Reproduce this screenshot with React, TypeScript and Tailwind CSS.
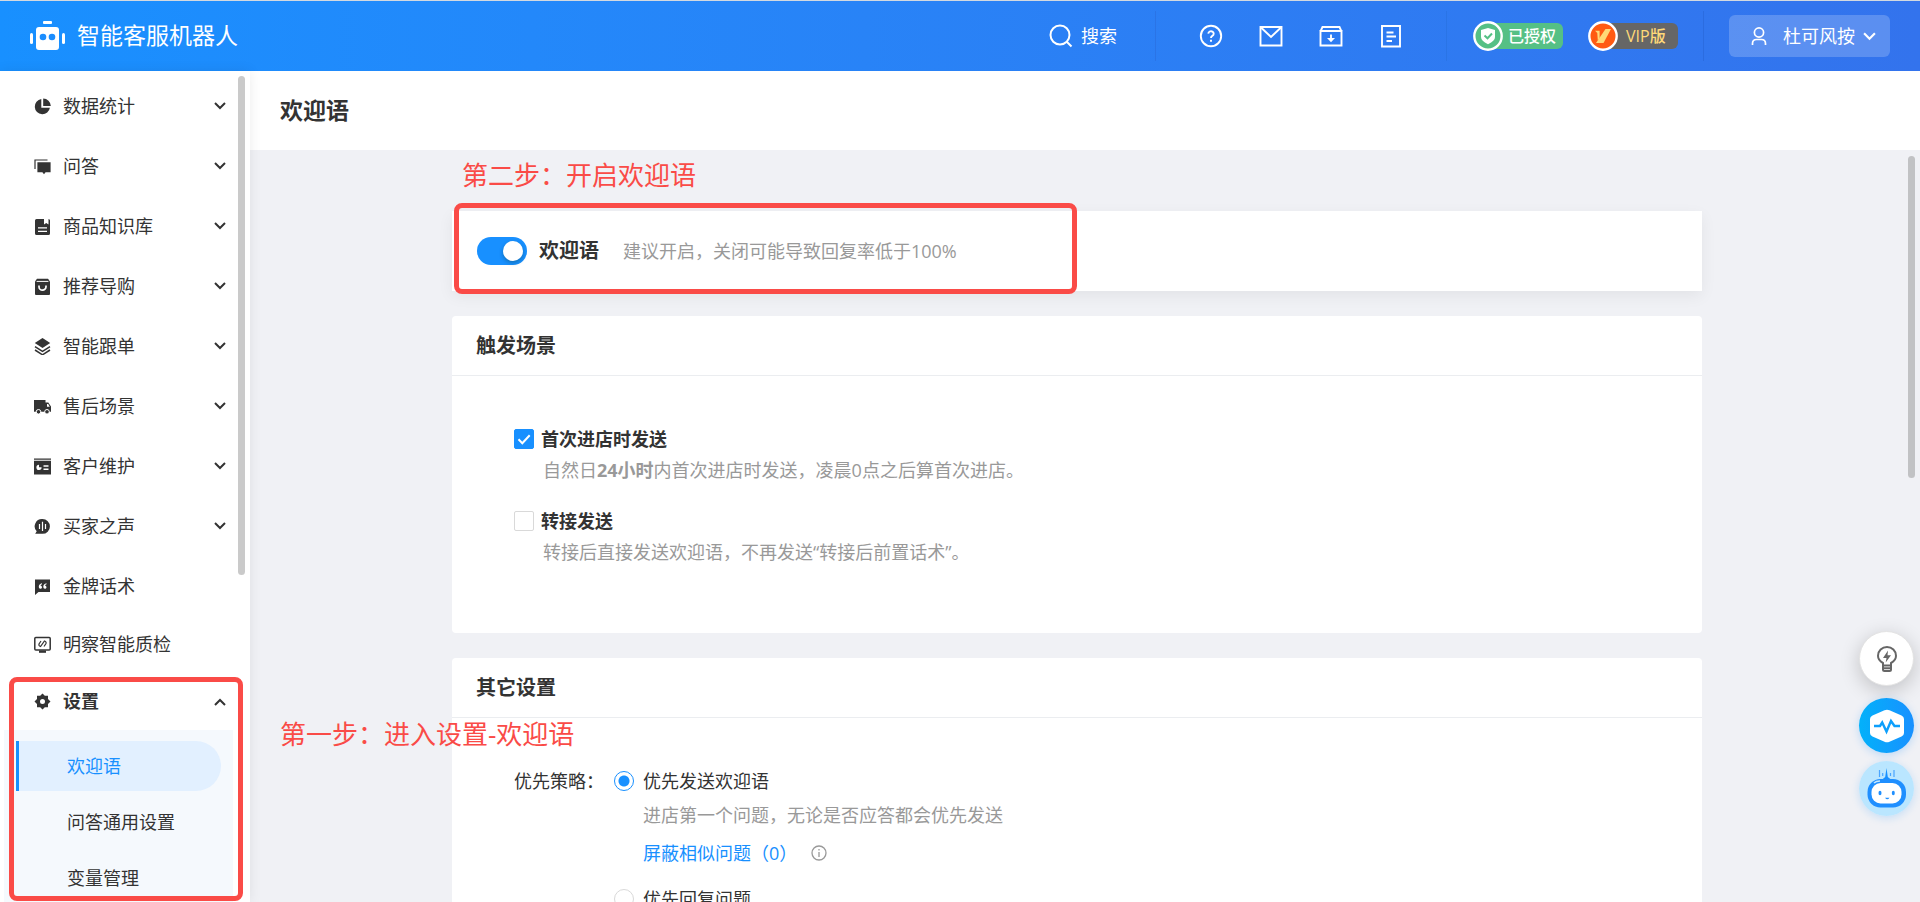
import { useState } from "react";
import type { ReactNode } from "react";
import { clsx } from "clsx";

type MenuItem = {
  label: string;
  icon: ReactNode;
  expandable?: boolean;
};

const menuItems: MenuItem[] = [
  {
    label: "数据统计",
    expandable: true,
    icon: (
      <>
        <path d="M7.3 1.1A7.6 7.6 0 1 0 15.9 9.7H7.3z" />
        <path d="M9.2 0.5a7.6 7.6 0 0 1 7.6 7.4H9.2z" />
      </>
    ),
  },
  {
    label: "问答",
    expandable: true,
    icon: (
      <>
        <path d="M1 11V2h12.500" fill="none" stroke="currentColor" strokeWidth="1.2" />
        <path d="M3.4 4.2h13.2v10H11.6l-1.6 2-1.6-2h-5z" />
      </>
    ),
  },
  {
    label: "商品知识库",
    expandable: true,
    icon: (
      <>
        <path d="M2.500 1H10v5.500l2.200-1.500 2.300 1.500V1q1.500.3 1.500 1.600v12.800q0 1.600-1.600 1.600H2.6Q1 17 1 15.400V2.500Q1 1 2.500 1z" />
        <path d="M4 9.800h9M4 13.300h9" stroke="#fff" strokeWidth="1.3" />
      </>
    ),
  },
  {
    label: "推荐导购",
    expandable: true,
    icon: (
      <>
        <path d="M3 .8h11l2 2.700v12.500q0 1-1 1H2q-1 0-1-1V3.500z" />
        <path d="M2.600 3.400h11.800" stroke="#fff" strokeWidth="1" />
        <path d="M5 7.500v1.200a3.500 3.500 0 0 0 7 0V7.500" fill="none" stroke="#fff" strokeWidth="1.700" />
      </>
    ),
  },
  {
    label: "智能跟单",
    expandable: true,
    icon: (
      <>
        <path d="M8.500 0 16.200 5 8.500 10 .8 5z" />
        <path d="M1 8.600l7.500 4.800L16 8.600M1 12l7.500 4.800L16 12" fill="none" stroke="currentColor" strokeWidth="1.500" />
      </>
    ),
  },
  {
    label: "售后场景",
    expandable: true,
    icon: (
      <>
        <path d="M0 2h11.500v2.400h2.800L17 8.500v5.300H0z" />
        <path d="M13 6h1.200l1.500 2.700H13z" fill="#fff" />
        <circle cx="4.500" cy="13.800" r="2.300" stroke="#fff" strokeWidth="1" />
        <circle cx="13" cy="13.800" r="2.300" stroke="#fff" strokeWidth="1" />
      </>
    ),
  },
  {
    label: "客户维护",
    expandable: true,
    icon: (
      <>
        <path d="M0 .5h17v1.300H0zM0 2.800h17V16.500H0z" />
        <path d="M5 6.800v2.500h2.600a2.600 2.600 0 1 1-2.600-2.500z" fill="#fff" />
        <path d="M9.500 8h5M9.500 11.300h5" stroke="#fff" strokeWidth="1.400" />
      </>
    ),
  },
  {
    label: "买家之声",
    expandable: true,
    icon: (
      <>
        <path d="M8.500 1a7.300 7.300 0 1 1 0 14.800H1.200l1.500-2.500A7.300 7.300 0 0 1 8.500 1z" />
        <path d="M8.500 3.800v9.200M5.500 6v5M11.500 6v5" stroke="#fff" strokeWidth="1.200" />
      </>
    ),
  },
  {
    label: "金牌话术",
    icon: (
      <>
        <path d="M1 1.500h15v12.500H4.500L1 17z" />
        <path
          d="M8 5.200c-2 .3-3.200 1.700-3.200 3.600 0 1.200.6 1.900 1.600 1.900s1.600-.7 1.600-1.500-.6-1.500-1.500-1.500c.1-.8.6-1.300 1.500-1.500zM12.500 5.200c-2 .3-3.200 1.700-3.200 3.600 0 1.200.6 1.900 1.600 1.900s1.600-.7 1.600-1.500-.6-1.500-1.500-1.500c.1-.8.6-1.300 1.500-1.500z"
          fill="#fff"
        />
      </>
    ),
  },
  {
    label: "明察智能质检",
    icon: (
      <>
        <rect x=".8" y="1.500" width="15.400" height="12.500" rx="1" fill="none" stroke="currentColor" strokeWidth="1.500" />
        <path d="M5 14.500h7v2.300H5z" />
        <path d="M7 5L5 8q-.5 2 1.500 2.500L10.500 5q2 .5 1.500 2.500l-2 3" fill="none" stroke="currentColor" strokeWidth="1.200" />
      </>
    ),
  },
];

const settingItems = ["欢迎语", "问答通用设置", "变量管理"];

const toolIcons = [
  {
    label: "帮助",
    icon: (
      <>
        <circle cx="12" cy="12" r="10.200" />
        <path d="M9.300 9.600a2.700 2.500 0 1 1 4 2.300c-1 .5-1.300.9-1.300 2" />
        <path d="M12 15.700v2" />
      </>
    ),
  },
  {
    label: "消息",
    icon: (
      <>
        <path d="M1.500 3h21v18.500h-21z" />
        <path d="M2 3.500l10 9.500L22 3.500" />
      </>
    ),
  },
  {
    label: "下载",
    icon: (
      <>
        <path d="M1.500 7v14.500h21V7z" />
        <path d="M1.500 7.300L3.500 3h17l2 4.300" />
        <path d="M12 10.500v5" />
        <path d="M8 14h8l-4 4.300z" fill="currentColor" stroke="none" />
      </>
    ),
  },
  {
    label: "文档",
    icon: (
      <>
        <path d="M3 2h18v20.500H3z" />
        <path d="M7.500 8.500h7M7.500 12.500h9.500M7.500 17h5.500" />
      </>
    ),
  },
];

function Chevron({ up, className }: { up?: boolean; className?: string }) {
  return (
    <svg viewBox="0 0 12 8" className={className} fill="none" stroke="currentColor" strokeWidth="2">
      <path d={up ? "M1 7l5-5 5 5" : "M1 1l5 5 5-5"} />
    </svg>
  );
}

function TopBar() {
  return (
    <header className="flex h-[71px] shrink-0 items-center border-t border-[#d3d9e0] bg-linear-to-r from-[#1890ff] to-[#3373ed] text-white">
      <div className="flex items-center gap-3 pl-[30px]">
        <svg viewBox="0 0 35 30" className="h-[30px] w-[35px]" fill="#fff">
          <rect x="13" y="0" width="9" height="3" rx="1" />
          <rect x="6" y="6" width="23" height="23" rx="3" />
          <rect x="0" y="12" width="3" height="11" rx="1.500" />
          <rect x="32" y="12" width="3" height="11" rx="1.500" />
          <circle cx="13" cy="16" r="3.300" fill="#1b8dfe" />
          <circle cx="22" cy="16" r="3.300" fill="#1b8dfe" />
        </svg>
        <span className="pb-0.5 text-[23px] leading-8">智能客服机器人</span>
      </div>

      <div className="ml-auto flex h-[50px] items-center">
        <button className="mr-[38px] flex items-center gap-2 text-[18px]">
          <svg viewBox="0 0 24 24" className="size-6" fill="none" stroke="currentColor" strokeWidth="2">
            <circle cx="11" cy="11" r="9.500" />
            <path d="M17.500 17.500l5 5" />
          </svg>
          搜索
        </button>
        <div className="flex h-full items-center gap-9 border-x border-[#2a74e6] px-[43px]">
          {toolIcons.map((t) => (
            <button key={t.label} aria-label={t.label}>
              <svg viewBox="0 0 24 24" className="size-6" fill="none" stroke="currentColor" strokeWidth="1.900">
                {t.icon}
              </svg>
            </button>
          ))}
        </div>
        <div className="flex h-full items-center gap-[25px] border-r border-[#2b6ce0] pr-[25px] pl-[26px]">
          <div className="flex items-center">
            <svg viewBox="0 0 30 30" className="relative size-[30px]">
              <circle cx="15" cy="15" r="13.700" fill="#55c085" stroke="#fff" strokeWidth="2.400" />
              <path d="M15 7l7 2v7q0 4-7 7.300Q8 20 8 16V9z" fill="#fff" />
              <path d="M11.500 14.500l3 2.800 4.500-4.800" fill="none" stroke="#55c085" strokeWidth="2" />
            </svg>
            <span className="-ml-4 flex h-[26px] w-[76px] items-center rounded-md bg-[#55c085] pl-[21px] text-[16px] font-medium">
              已授权
            </span>
          </div>
          <div className="flex items-center">
            <svg viewBox="0 0 30 30" className="relative size-[30px]">
              <circle cx="15" cy="15" r="13.700" fill="#ff5a12" stroke="#fff" strokeWidth="2.400" />
              <path d="M7 9.800h4.600V17l-1.800 2.800L9.300 12z" fill="#ffd978" />
              <path d="M17.500 8H23L15.500 22H8z" fill="#ffd978" />
            </svg>
            <span className="-ml-4 flex h-[26px] w-[76px] items-center rounded-md bg-[#666] pl-6 text-[16px] font-medium text-[#ffd978]">
              VIP版
            </span>
          </div>
        </div>
        <button className="mr-[30px] ml-[25px] flex h-[42px] w-[161px] items-center rounded-md bg-white/20 pl-[22px] text-[18px]">
          <svg viewBox="0 0 16 20" className="mr-4 h-5 w-4" fill="none" stroke="currentColor" strokeWidth="1.700">
            <circle cx="8" cy="6.500" r="4.600" />
            <path d="M1.500 19v-1.500q0-4 4-4h5q4 0 4 4V19" />
          </svg>
          杜可风按
          <Chevron className="ml-2 h-[9px] w-[13px]" />
        </button>
      </div>
    </header>
  );
}

function MenuIcon({ children }: { children: ReactNode }) {
  return (
    <svg viewBox="0 0 17 17" className="mr-3 size-[17px] shrink-0" fill="currentColor">
      {children}
    </svg>
  );
}

function Sidebar() {
  const [current, setCurrent] = useState("欢迎语");

  return (
    <aside className="relative z-10 w-[250px] shrink-0 overflow-hidden bg-white pt-[5px] shadow-[0_0_12px_rgba(0,0,0,0.08)]">
      <nav className="flex flex-col">
        {menuItems.map((m) => (
          <button
            key={m.label}
            className="flex h-[60px] shrink-0 items-center pr-6 pl-[34px] text-[18px] last-of-type:h-[57px] nth-10:h-[57px]"
          >
            <MenuIcon>{m.icon}</MenuIcon>
            {m.label}
            {m.expandable && <Chevron className="ml-auto h-2 w-3" />}
          </button>
        ))}
        <button className="flex h-[57px] shrink-0 items-center pr-6 pl-[34px] text-[18px] font-bold">
          <MenuIcon>
            <path
              fillRule="evenodd"
              d="M8.500.5l2.300 2.300H14v3.300l2.500 2.400L14 10.900v3.300h-3.200L8.500 16.500l-2.300-2.300H3v-3.300L.5 8.500 3 6.100V2.800h3.200zM8.500 6a2.500 2.500 0 1 0 0 5 2.500 2.500 0 1 0 0-5z"
            />
          </MenuIcon>
          设置
          <Chevron up className="ml-auto h-2 w-3" />
        </button>
        <div className="mr-[17px] ml-1 flex flex-col gap-1.5 bg-[#f5f9fd] pt-[11px] pb-10 pl-3">
          {settingItems.map((s) => (
            <a
              key={s}
              href="#"
              onClick={() => setCurrent(s)}
              className={clsx(
                "mr-3 flex h-[50px] items-center rounded-r-full border-l-3 pl-12 text-[18px]",
                s === current ? "border-[#1890ff] bg-[#e2f0ff] text-[#1890ff]" : "border-transparent"
              )}
            >
              {s}
            </a>
          ))}
        </div>
      </nav>
      <div className="absolute top-[5px] right-[5px] h-[499px] w-[7px] rounded-full bg-[#cacaca]" />
    </aside>
  );
}

function Card({ title, children }: { title: string; children: ReactNode }) {
  return (
    <section className="rounded-sm bg-white">
      <h2 className="flex h-[60px] items-center border-b border-[#ebedf0] px-6 text-[20px] font-bold">{title}</h2>
      <div className="px-[62px] pt-[50px] pb-[68px]">{children}</div>
    </section>
  );
}

function CheckOption({ label, defaultChecked, children }: { label: string; defaultChecked?: boolean; children: ReactNode }) {
  return (
    <div className="flex flex-col gap-[5px]">
      <label className="flex items-center gap-[7px] leading-[26px] font-bold">
        <span className="relative size-5">
          <input
            type="checkbox"
            defaultChecked={defaultChecked}
            className="peer block size-5 appearance-none rounded-xs border border-[#d9d9d9] bg-white checked:border-[#1890ff] checked:bg-[#1890ff]"
          />
          <svg viewBox="0 0 20 20" className="pointer-events-none absolute inset-0 hidden peer-checked:block" fill="none" stroke="#fff" strokeWidth="2">
            <path d="M4.500 10.300l3.800 3.900 7.400-8" />
          </svg>
        </span>
        {label}
      </label>
      <p className="pl-[29px] leading-[26px] text-[#999]">{children}</p>
    </div>
  );
}

function RadioOption({ label, defaultChecked }: { label: string; defaultChecked?: boolean }) {
  return (
    <label className="flex items-center gap-[9px] leading-[26px]">
      <input
        type="radio"
        name="strategy"
        defaultChecked={defaultChecked}
        className="size-5 appearance-none rounded-full border border-[#d9d9d9] bg-white checked:border-[#1890ff] checked:bg-[radial-gradient(circle,#1890ff_5px,#fff_6px)]"
      />
      {label}
    </label>
  );
}

function FloatingTools() {
  return (
    <div className="absolute top-[631px] right-1.5 z-20 flex flex-col items-start gap-2">
      <button aria-label="建议" className="mb-1 flex size-[55px] items-center justify-center rounded-full border border-[#e3e3e3] bg-white shadow-[0_5px_20px_rgba(0,0,0,0.2)]">
        <svg viewBox="0 0 20 26" className="h-[26px] w-5" fill="none" stroke="#666" strokeWidth="2">
          <path d="M6 19.500v-2.500Q1 14.500 1 9.800a9 8.800 0 0 1 18 0q0 4.700-5 7.200v2.500z" />
          <path d="M6 20v3.500q0 1.500 1.500 1.500h5q1.500 0 1.500-1.500V20M6 22.300h8" />
          <path d="M11 4.500L6 12h3.500l-.8 4.500L14 9.300h-3.500z" fill="#666" stroke="none" />
        </svg>
      </button>
      <button aria-label="诊断" className="flex size-[55px] items-center justify-center rounded-full bg-linear-to-r from-[#03b1fa] to-[#1890ff] shadow-[0_2px_8px_rgba(24,144,255,0.25)]">
        <svg viewBox="0 0 34 34" className="size-[34px]">
          <path d="M14.500 1.200q2.500-1 5 0L31.500 6.500q2.500 1 2.500 3.500v14q0 2.500-2.500 3.500L19.500 32.800q-2.500 1-5 0L2.500 27.500Q0 26.500 0 24V10q0-2.500 2.500-3.500z" fill="#fff" />
          <path d="M4 17h6l2.200-3.500 4.300 9L21 12l3.500 5H30" fill="none" stroke="#0d9ffc" strokeWidth="2.400" />
        </svg>
      </button>
      <button aria-label="机器人助手" className="rounded-full shadow-[0_2px_8px_rgba(24,144,255,0.2)]">
        <svg viewBox="0 0 55 55" className="size-[55px]">
          <circle cx="27.500" cy="27.500" r="27.500" fill="#bae6ff" />
          <path d="M20.500 9v7M35 9v7" stroke="#4aa5ff" strokeWidth="1.200" />
          <path d="M23.700 12v3M31.500 12v3" stroke="#4aa5ff" strokeWidth="1.200" />
          <path d="M27.500 7l1.300 9 2.500 2h-7.500l2.400-2z" fill="#1890ff" />
          <rect x="8.500" y="18" width="38.500" height="28.500" rx="13" fill="#1f8fff" />
          <rect x="12.500" y="22" width="30" height="20.500" rx="9" fill="#fff" />
          <path d="M15 22q2-2 6-2" stroke="#c6e8ff" strokeWidth="1.500" fill="none" />
          <ellipse cx="21" cy="32" rx="1.500" ry="2.300" fill="#1f8fff" />
          <ellipse cx="34.300" cy="32" rx="1.500" ry="2.300" fill="#1f8fff" />
          <path d="M26 36.800h4.500q-2.200 3-4.500 0z" fill="#1f8fff" />
        </svg>
      </button>
    </div>
  );
}

// Red boxes and captions drawn over the page to guide the user
function GuideMarks() {
  return (
    <div className="pointer-events-none absolute inset-0 z-30 text-[26px] leading-9 text-[#fa4b47]">
      <div className="absolute top-[677px] left-[9px] h-[224px] w-[234px] rounded-lg border-5 border-[#fa4b47]" />
      <span className="absolute top-[716px] left-[280px]">第一步：进入设置-欢迎语</span>
      <div className="absolute top-[203px] left-[454px] h-[91px] w-[623px] rounded-lg border-5 border-[#fa4b47]" />
      <span className="absolute top-[157px] left-[462px]">第二步：开启欢迎语</span>
    </div>
  );
}

export default function App() {
  const [enabled, setEnabled] = useState(true);

  return (
    <div className="relative flex h-screen flex-col overflow-hidden bg-[#f0f1f5] font-['Open_Sans','Noto_Sans_CJK_SC',sans-serif] text-[18px] text-[#333]">
      <TopBar />
      <div className="flex min-h-0 flex-1">
        <Sidebar />
        <main className="flex min-w-0 flex-1 flex-col">
          <h1 className="flex h-[79px] shrink-0 items-center bg-white px-[30px] text-[23px] font-bold">欢迎语</h1>
          <div className="relative min-h-0 flex-1 overflow-hidden pr-4">
            <div className="mx-auto flex max-w-[1250px] flex-col gap-[25px] pt-[61px]">
              <section className="flex h-20 items-center bg-white px-[25px] shadow-[0_5px_15px_rgba(0,0,0,0.06)]">
                <button
                  role="switch"
                  aria-checked={enabled}
                  aria-label="欢迎语"
                  onClick={() => setEnabled(!enabled)}
                  className={clsx("flex h-7 w-[50px] items-center rounded-full px-1", enabled ? "justify-end bg-[#1890ff]" : "bg-[#bfbfbf]")}
                >
                  <span className="size-5 rounded-full bg-white shadow-[0_2px_4px_rgba(0,35,11,0.3)]" />
                </button>
                <span className="ml-3 text-[20px] font-bold">欢迎语</span>
                <span className="ml-6 text-[#999]">建议开启，关闭可能导致回复率低于100%</span>
              </section>

              <Card title="触发场景">
                <div className="flex flex-col gap-[25px]">
                  <CheckOption label="首次进店时发送" defaultChecked>
                    自然日<b className="font-bold">24小时</b>内首次进店时发送，凌晨0点之后算首次进店。
                  </CheckOption>
                  <CheckOption label="转接发送">转接后直接发送欢迎语，不再发送“转接后前置话术”。</CheckOption>
                </div>
              </Card>

              <Card title="其它设置">
                <div className="flex leading-[26px]">
                  <span className="w-[100px] shrink-0">优先策略：</span>
                  <div className="flex flex-col">
                    <RadioOption label="优先发送欢迎语" defaultChecked />
                    <p className="mt-2 pl-[29px] text-[#999]">进店第一个问题，无论是否应答都会优先发送</p>
                    <div className="mt-3 mb-5 flex items-center pl-[29px]">
                      <a href="#" className="text-[#1890ff]">
                        屏蔽相似问题（0）
                      </a>
                      <svg viewBox="0 0 16 16" className="ml-3.5 size-4" fill="none" stroke="#999" strokeWidth="1.300">
                        <circle cx="8" cy="8" r="7" />
                        <path d="M8 7v5M8 4v1.600" />
                      </svg>
                    </div>
                    <RadioOption label="优先回复问题" />
                  </div>
                </div>
              </Card>
            </div>
            <div className="absolute top-1.5 right-[5px] h-[322px] w-[7px] rounded-full bg-[#c1c2c4]" />
          </div>
        </main>
      </div>
      <FloatingTools />
      <GuideMarks />
    </div>
  );
}
